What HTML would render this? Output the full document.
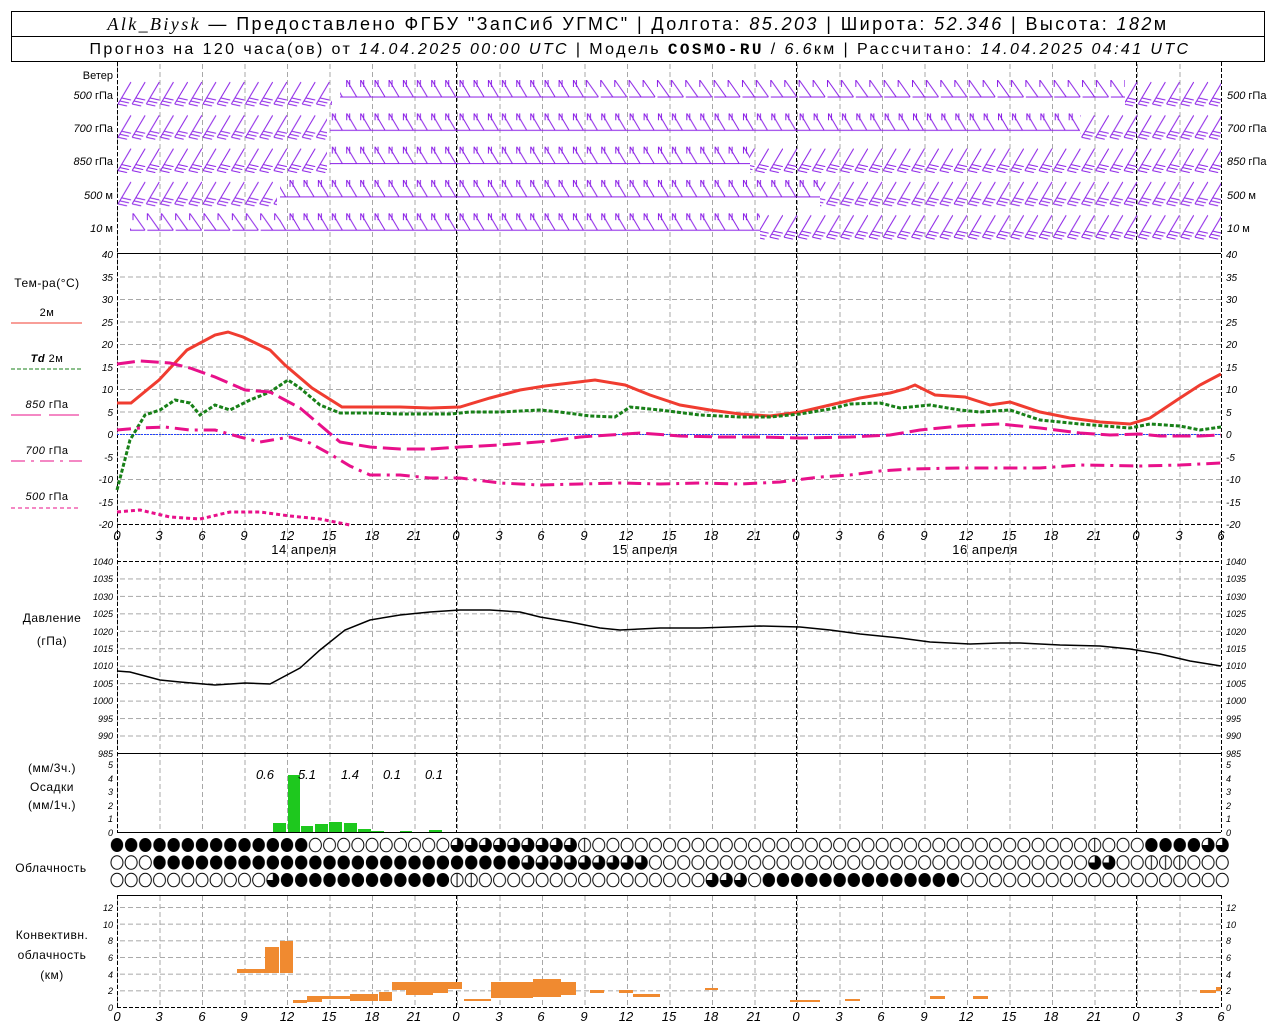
<!DOCTYPE html>
<html><head><meta charset="utf-8"><style>
html,body{margin:0;padding:0;background:#fff;}
svg{display:block;}
text{font-family:"Liberation Sans",sans-serif;fill:#000;}
.t{font-size:10px;font-style:italic;}
.l{font-size:12px;letter-spacing:0.5px;}
</style></head><body>
<svg width="1280" height="1024" viewBox="0 0 1280 1024" xmlns="http://www.w3.org/2000/svg">
<defs>
<pattern id="vg" x="117" y="0" width="42.5" height="8" patternUnits="userSpaceOnUse"><line x1="0.5" y1="0" x2="0.5" y2="5" stroke="#a8a8a8"/></pattern>
<pattern id="hgT" x="0" y="254" width="8" height="22.5" patternUnits="userSpaceOnUse"><line x1="0" y1="0.5" x2="5" y2="0.5" stroke="#a8a8a8"/></pattern>
<pattern id="hgP" x="0" y="561" width="8" height="17.45" patternUnits="userSpaceOnUse"><line x1="0" y1="0.5" x2="5" y2="0.5" stroke="#a8a8a8"/></pattern>
<pattern id="hgC" x="0" y="1007" width="8" height="16.67" patternUnits="userSpaceOnUse"><line x1="0" y1="0.5" x2="5" y2="0.5" stroke="#a8a8a8"/></pattern>
<pattern id="cf" x="109.9" y="836.5" width="14.17" height="17.5" patternUnits="userSpaceOnUse"><ellipse cx="7.08" cy="8.5" rx="6.2" ry="7" fill="#000"/></pattern>
<pattern id="ce" x="109.9" y="836.5" width="14.17" height="17.5" patternUnits="userSpaceOnUse"><ellipse cx="7.08" cy="8.5" rx="6" ry="6.8" fill="#fff" stroke="#000"/></pattern>
<pattern id="cq" x="109.9" y="836.5" width="14.17" height="17.5" patternUnits="userSpaceOnUse"><ellipse cx="7.08" cy="8.5" rx="6" ry="6.8" fill="#fff" stroke="#000"/><path d="M7.08 8.5 V1.7 A6 6.8 0 1 1 1.08 8.5 Z" fill="#000"/></pattern>
<pattern id="ch" x="109.9" y="836.5" width="14.17" height="17.5" patternUnits="userSpaceOnUse"><ellipse cx="7.08" cy="8.5" rx="6" ry="6.8" fill="#fff" stroke="#000"/><line x1="7.08" y1="1.7" x2="7.08" y2="15.3" stroke="#000"/></pattern>
<pattern id="wA" x="117" y="80" width="14.17" height="33.3" patternUnits="userSpaceOnUse"><g stroke="#8a1ee6" fill="none"><path d="M1 24 L14 2 M1 24 L10 26 M3 21 L12 23 M5 18 L14 20"/></g></pattern>
<pattern id="wB" x="117" y="80" width="28.34" height="33.3" patternUnits="userSpaceOnUse"><g stroke="#8a1ee6" fill="none"><path d="M0 17 H28.4 M3 0 L13 17 M3 0 V7 M6 0 V7 M17 0 L27 17 M17 0 V7 M20 0 V7"/></g></pattern>
<pattern id="wC" x="117" y="80" width="28.34" height="33.3" patternUnits="userSpaceOnUse"><g stroke="#8a1ee6" fill="none"><path d="M2 0 L14 17 M2 0 V7 M16 0 L28 17 M16 0 V7 M2 17 H28"/></g></pattern>
</defs>
<rect width="1280" height="1024" fill="#fff"/>

<!-- header -->
<rect x="11.5" y="11.5" width="1253" height="50" fill="none" stroke="#000"/>
<line x1="11" y1="36.5" x2="1265" y2="36.5" stroke="#000"/>
<text x="638" y="30" text-anchor="middle" style="font-size:18px;letter-spacing:2.4px"><tspan font-family="Liberation Serif" font-style="italic">Alk_Biysk</tspan> — Предоставлено ФГБУ "ЗапСиб УГМС" | Долгота: <tspan font-style="italic">85.203</tspan> | Широта: <tspan font-style="italic">52.346</tspan> | Высота: <tspan font-style="italic">182</tspan>м</text>
<text x="640" y="54" text-anchor="middle" style="font-size:16px;letter-spacing:2.4px">Прогноз на 120 часа(ов) от <tspan font-style="italic">14.04.2025 00:00 UTC</tspan>  | Модель <tspan font-family="Liberation Mono" font-weight="bold">COSMO-RU</tspan> / <tspan font-style="italic">6.6</tspan>км | Рассчитано: <tspan font-style="italic">14.04.2025 04:41 UTC</tspan></text>

<!-- grids -->
<rect x="117" y="62" width="1104" height="770" fill="url(#vg)"/>
<rect x="117" y="895" width="1104" height="112" fill="url(#vg)"/>
<rect x="117" y="255" width="1104" height="268" fill="url(#hgT)"/>
<rect x="117" y="562" width="1104" height="190" fill="url(#hgP)"/>
<rect x="117" y="896" width="1104" height="110" fill="url(#hgC)"/>
<g stroke="#000" stroke-dasharray="4,2">
<line x1="117.5" y1="62" x2="117.5" y2="832"/><line x1="1221.5" y1="62" x2="1221.5" y2="832"/>
<line x1="456.5" y1="62" x2="456.5" y2="832"/><line x1="796.5" y1="62" x2="796.5" y2="832"/><line x1="1136.5" y1="62" x2="1136.5" y2="832"/>
<line x1="117.5" y1="895" x2="117.5" y2="1007"/><line x1="1221.5" y1="895" x2="1221.5" y2="1007"/>
<line x1="456.5" y1="895" x2="456.5" y2="1007"/><line x1="796.5" y1="895" x2="796.5" y2="1007"/><line x1="1136.5" y1="895" x2="1136.5" y2="1007"/>
<line x1="117" y1="561.5" x2="1221" y2="561.5"/><line x1="117" y1="524.5" x2="1221" y2="524.5"/>
<line x1="117" y1="1007.5" x2="1221" y2="1007.5"/>
</g>
<g stroke="#000">
<line x1="117" y1="253.5" x2="1221" y2="253.5"/>
<line x1="117" y1="753.5" x2="1221" y2="753.5"/>
<line x1="117" y1="832.5" x2="1221" y2="832.5"/>
<line x1="117" y1="895.5" x2="1221" y2="895.5"/>
</g>

<!-- wind -->
<g>
<rect x="117" y="80" width="215" height="33" fill="url(#wA)"/>
<rect x="340" y="80" width="245" height="33" fill="url(#wB)"/>
<rect x="585" y="80" width="540" height="33" fill="url(#wC)"/>
<rect x="1125" y="80" width="96" height="33" fill="url(#wA)"/>
<rect x="117" y="113.3" width="210" height="33" fill="url(#wA)"/>
<rect x="330" y="113.3" width="750" height="33" fill="url(#wB)"/>
<rect x="1080" y="113.3" width="141" height="33" fill="url(#wA)"/>
<rect x="117" y="146.6" width="210" height="33" fill="url(#wA)"/>
<rect x="330" y="146.6" width="420" height="33" fill="url(#wB)"/>
<rect x="750" y="146.6" width="471" height="33" fill="url(#wA)"/>
<rect x="117" y="179.9" width="160" height="33" fill="url(#wA)"/>
<rect x="280" y="179.9" width="540" height="33" fill="url(#wB)"/>
<rect x="820" y="179.9" width="401" height="33" fill="url(#wA)"/>
<rect x="130" y="213.2" width="150" height="33" fill="url(#wC)"/>
<rect x="280" y="213.2" width="480" height="33" fill="url(#wB)"/>
<rect x="760" y="213.2" width="461" height="33" fill="url(#wA)"/>
</g>

<!-- temperature -->
<line x1="117" y1="434.5" x2="1221" y2="434.5" stroke="#2040ff" stroke-dasharray="2,1"/>
<polyline fill="none" stroke="#f03c30" stroke-width="3" points="117,403 131,403 159,380 187,350 215,335 228,332 243,337 270,350 285,365 312,388 342,407 370,407 400,407 430,408 460,407 490,398 520,390 545,386 570,383 595,380 625,385 650,395 680,405 710,410 740,414 770,416 800,412 830,405 860,398 890,393 905,389 915,385 935,395 965,397 990,405 1010,402 1040,412 1070,418 1100,422 1130,424 1150,418 1180,398 1200,385 1221,374"/>
<polyline fill="none" stroke="#188018" stroke-width="3" stroke-dasharray="4,2" points="117,490 130,440 145,415 160,410 175,400 190,403 200,415 215,405 230,410 250,400 270,392 288,380 300,388 320,405 340,413 370,413 400,414 450,414 470,412 500,412 540,410 560,412 590,416 615,417 630,407 660,410 700,415 740,417 770,417 800,414 830,409 850,404 880,403 900,408 930,405 960,410 980,412 1010,410 1040,420 1080,424 1130,428 1150,424 1180,426 1200,430 1221,427"/>
<polyline fill="none" stroke="#e8108a" stroke-width="3" stroke-dasharray="18,6" points="117,364 140,361 170,363 190,368 215,377 245,390 270,392 285,400 300,408 320,425 340,442 370,447 400,449 430,449 460,447 500,445 550,441 580,437 610,435 640,433 680,436 720,437 760,437 800,438 850,437 890,435 920,430 960,426 1000,424 1040,428 1080,433 1110,435 1140,434 1160,436 1200,436 1221,435"/>
<polyline fill="none" stroke="#e8108a" stroke-width="3" stroke-dasharray="14,6,3,6" points="117,430 140,428 165,427 190,430 215,430 240,437 260,442 290,437 310,443 330,454 350,466 370,475 400,475 430,478 460,478 500,483 540,485 580,484 620,483 660,484 700,483 740,484 780,482 820,477 850,475 880,471 910,469 960,468 1000,468 1040,468 1080,465 1140,466 1180,465 1221,463"/>
<polyline fill="none" stroke="#e8108a" stroke-width="3" stroke-dasharray="4,3" points="117,512 140,510 170,517 200,519 230,512 260,512 290,516 320,519 350,525"/>

<!-- temp legend -->
<g class="l">
<text x="47" y="287" text-anchor="middle">Тем-ра(°С)</text>
<text x="47" y="316" text-anchor="middle" style="font-size:11px">2м</text>
<line x1="11" y1="323" x2="82" y2="323" stroke="#f03c30"/>
<text x="47" y="362" text-anchor="middle" style="font-size:11px"><tspan font-style="italic" font-weight="bold">Td</tspan>  2м</text>
<line x1="11" y1="369" x2="82" y2="369" stroke="#188018" stroke-dasharray="4,2"/>
<text x="47" y="408" text-anchor="middle" style="font-size:11px"><tspan font-style="italic">850</tspan> гПа</text>
<line x1="11" y1="415" x2="82" y2="415" stroke="#e8108a" stroke-dasharray="30,8"/>
<text x="47" y="454" text-anchor="middle" style="font-size:11px"><tspan font-style="italic">700</tspan> гПа</text>
<line x1="11" y1="461" x2="82" y2="461" stroke="#e8108a" stroke-dasharray="14,6,3,6"/>
<text x="47" y="500" text-anchor="middle" style="font-size:11px"><tspan font-style="italic">500</tspan> гПа</text>
<line x1="11" y1="508" x2="78" y2="508" stroke="#e8108a" stroke-dasharray="4,3"/>
</g>

<!-- wind labels -->
<g style="font-size:11px">
<text x="113" y="79" text-anchor="end">Ветер</text>
<text x="113" y="99" text-anchor="end"><tspan font-style="italic">500</tspan> гПа</text>
<text x="113" y="132" text-anchor="end"><tspan font-style="italic">700</tspan> гПа</text>
<text x="113" y="165" text-anchor="end"><tspan font-style="italic">850</tspan> гПа</text>
<text x="113" y="199" text-anchor="end"><tspan font-style="italic">500</tspan>  м</text>
<text x="113" y="232" text-anchor="end"><tspan font-style="italic">10</tspan>   м</text>
<text x="1227" y="99"><tspan font-style="italic">500</tspan> гПа</text>
<text x="1227" y="132"><tspan font-style="italic">700</tspan> гПа</text>
<text x="1227" y="165"><tspan font-style="italic">850</tspan> гПа</text>
<text x="1227" y="199"><tspan font-style="italic">500</tspan>  м</text>
<text x="1227" y="232"><tspan font-style="italic">10</tspan>   м</text>
</g>

<!-- temp ticks -->
<g class="t">
<text x="113" y="258" text-anchor="end">40</text><text x="113" y="281" text-anchor="end">35</text><text x="113" y="303" text-anchor="end">30</text><text x="113" y="326" text-anchor="end">25</text><text x="113" y="348" text-anchor="end">20</text><text x="113" y="371" text-anchor="end">15</text><text x="113" y="393" text-anchor="end">10</text><text x="113" y="416" text-anchor="end">5</text><text x="113" y="438" text-anchor="end">0</text><text x="113" y="461" text-anchor="end">-5</text><text x="113" y="483" text-anchor="end">-10</text><text x="113" y="506" text-anchor="end">-15</text><text x="113" y="528" text-anchor="end">-20</text>
<text x="1226" y="258">40</text><text x="1226" y="281">35</text><text x="1226" y="303">30</text><text x="1226" y="326">25</text><text x="1226" y="348">20</text><text x="1226" y="371">15</text><text x="1226" y="393">10</text><text x="1226" y="416">5</text><text x="1226" y="438">0</text><text x="1226" y="461">-5</text><text x="1226" y="483">-10</text><text x="1226" y="506">-15</text><text x="1226" y="528">-20</text>
</g>
<g class="t" style="font-size:13px" text-anchor="middle">
<text x="117" y="540">0</text><text x="159" y="540">3</text><text x="202" y="540">6</text><text x="244" y="540">9</text><text x="287" y="540">12</text><text x="329" y="540">15</text><text x="372" y="540">18</text><text x="414" y="540">21</text><text x="456" y="540">0</text><text x="499" y="540">3</text><text x="541" y="540">6</text><text x="584" y="540">9</text><text x="626" y="540">12</text><text x="669" y="540">15</text><text x="711" y="540">18</text><text x="754" y="540">21</text><text x="796" y="540">0</text><text x="839" y="540">3</text><text x="881" y="540">6</text><text x="924" y="540">9</text><text x="966" y="540">12</text><text x="1009" y="540">15</text><text x="1051" y="540">18</text><text x="1094" y="540">21</text><text x="1136" y="540">0</text><text x="1179" y="540">3</text><text x="1221" y="540">6</text>
</g>
<g class="l" text-anchor="middle" style="font-size:13px">
<text x="304" y="554">14 апреля</text><text x="645" y="554">15 апреля</text><text x="985" y="554">16 апреля</text>
</g>

<!-- pressure -->
<polyline fill="none" stroke="#000" stroke-width="1.5" points="117,671 130,672 160,680 180,682 215,685 245,683 270,684 300,668 320,650 345,630 370,620 400,615 430,612 460,610 490,610 520,612 540,617 570,622 600,628 620,630 660,628 700,628 760,626 800,627 830,630 860,634 900,638 930,642 970,644 1000,643 1020,643 1060,645 1100,646 1130,649 1160,654 1190,661 1221,666"/>
<g class="l" text-anchor="middle"><text x="52" y="622">Давление</text><text x="52" y="645">(гПа)</text></g>
<g class="t" style="font-size:9px">
<text x="113" y="565" text-anchor="end">1040</text><text x="113" y="582" text-anchor="end">1035</text><text x="113" y="600" text-anchor="end">1030</text><text x="113" y="617" text-anchor="end">1025</text><text x="113" y="635" text-anchor="end">1020</text><text x="113" y="652" text-anchor="end">1015</text><text x="113" y="669" text-anchor="end">1010</text><text x="113" y="687" text-anchor="end">1005</text><text x="113" y="704" text-anchor="end">1000</text><text x="113" y="722" text-anchor="end">995</text><text x="113" y="739" text-anchor="end">990</text><text x="113" y="757" text-anchor="end">985</text>
<text x="1226" y="565">1040</text><text x="1226" y="582">1035</text><text x="1226" y="600">1030</text><text x="1226" y="617">1025</text><text x="1226" y="635">1020</text><text x="1226" y="652">1015</text><text x="1226" y="669">1010</text><text x="1226" y="687">1005</text><text x="1226" y="704">1000</text><text x="1226" y="722">995</text><text x="1226" y="739">990</text><text x="1226" y="757">985</text>
</g>

<!-- precip -->
<g fill="#1ec81e">
<rect x="273" y="823" width="13" height="9"/><rect x="288" y="775" width="12" height="57"/><rect x="301" y="826" width="12" height="6"/><rect x="315" y="824" width="13" height="8"/><rect x="329" y="822" width="13" height="10"/><rect x="344" y="823" width="13" height="9"/><rect x="358" y="829" width="13" height="3"/><rect x="371" y="831" width="13" height="1"/><rect x="400" y="831" width="12" height="1"/><rect x="429" y="830" width="13" height="2"/>
</g>
<g class="t" style="font-size:13px" text-anchor="middle"><text x="265" y="779">0.6</text><text x="307" y="779">5.1</text><text x="350" y="779">1.4</text><text x="392" y="779">0.1</text><text x="434" y="779">0.1</text></g>
<g class="l" text-anchor="middle"><text x="52" y="772">(мм/3ч.)</text><text x="52" y="791">Осадки</text><text x="52" y="809">(мм/1ч.)</text></g>
<g class="t" style="font-size:9px">
<text x="113" y="768" text-anchor="end">5</text><text x="113" y="782" text-anchor="end">4</text><text x="113" y="795" text-anchor="end">3</text><text x="113" y="809" text-anchor="end">2</text><text x="113" y="822" text-anchor="end">1</text><text x="113" y="836" text-anchor="end">0</text>
<text x="1226" y="768">5</text><text x="1226" y="782">4</text><text x="1226" y="795">3</text><text x="1226" y="809">2</text><text x="1226" y="822">1</text><text x="1226" y="836">0</text>
</g>

<!-- clouds -->
<g>
<rect x="109.9" y="836.5" width="198.4" height="17.5" fill="url(#cf)"/>
<rect x="308.3" y="836.5" width="141.7" height="17.5" fill="url(#ce)"/>
<rect x="450" y="836.5" width="127.5" height="17.5" fill="url(#cq)"/>
<rect x="577.5" y="836.5" width="14.2" height="17.5" fill="url(#ch)"/>
<rect x="591.7" y="836.5" width="496" height="17.5" fill="url(#ce)"/>
<rect x="1087.7" y="836.5" width="14.2" height="17.5" fill="url(#ch)"/>
<rect x="1101.9" y="836.5" width="42.5" height="17.5" fill="url(#ce)"/>
<rect x="1144.4" y="836.5" width="56.7" height="17.5" fill="url(#cf)"/>
<rect x="1201.1" y="836.5" width="28.4" height="17.5" fill="url(#cq)"/>

<rect x="109.9" y="854" width="42.5" height="17.5" fill="url(#ce)"/>
<rect x="152.4" y="854" width="368.4" height="17.5" fill="url(#cf)"/>
<rect x="520.8" y="854" width="127.5" height="17.5" fill="url(#cq)"/>
<rect x="648.3" y="854" width="439.4" height="17.5" fill="url(#ce)"/>
<rect x="1087.7" y="854" width="28.4" height="17.5" fill="url(#cq)"/>
<rect x="1116.1" y="854" width="28.4" height="17.5" fill="url(#ce)"/>
<rect x="1144.4" y="854" width="42.5" height="17.5" fill="url(#ch)"/>
<rect x="1186.9" y="854" width="42.5" height="17.5" fill="url(#ce)"/>

<rect x="109.9" y="871.5" width="155.9" height="17.5" fill="url(#ce)"/>
<rect x="265.8" y="871.5" width="14.2" height="17.5" fill="url(#cq)"/>
<rect x="280" y="871.5" width="170" height="17.5" fill="url(#cf)"/>
<rect x="450" y="871.5" width="28.4" height="17.5" fill="url(#ch)"/>
<rect x="478.4" y="871.5" width="226.7" height="17.5" fill="url(#ce)"/>
<rect x="705.1" y="871.5" width="42.5" height="17.5" fill="url(#cq)"/>
<rect x="747.6" y="871.5" width="14.2" height="17.5" fill="url(#ce)"/>
<rect x="761.8" y="871.5" width="198.4" height="17.5" fill="url(#cf)"/>
<rect x="960.2" y="871.5" width="269.3" height="17.5" fill="url(#ce)"/>
</g>
<text x="51" y="872" class="l" text-anchor="middle">Облачность</text>

<!-- convective -->
<g fill="#f08a30">
<rect x="237" y="969" width="28" height="4"/><rect x="265" y="947" width="14" height="26"/><rect x="280" y="941" width="13" height="32"/>
<rect x="293" y="1000" width="14" height="3"/><rect x="307" y="996" width="15" height="6"/><rect x="322" y="996" width="28" height="3"/><rect x="350" y="994" width="28" height="7"/><rect x="379" y="992" width="13" height="9"/>
<rect x="392" y="982" width="14" height="8"/><rect x="406" y="982" width="27" height="13"/><rect x="433" y="982" width="15" height="11"/><rect x="448" y="982" width="14" height="7"/>
<rect x="464" y="999" width="27" height="2"/><rect x="491" y="982" width="42" height="16"/><rect x="533" y="979" width="14" height="18"/><rect x="547" y="979" width="14" height="18"/><rect x="561" y="982" width="15" height="13"/>
<rect x="590" y="990" width="14" height="3"/><rect x="619" y="990" width="14" height="3"/><rect x="633" y="994" width="27" height="3"/>
<rect x="705" y="988" width="13" height="2"/><rect x="790" y="1000" width="30" height="2"/><rect x="845" y="999" width="15" height="2"/><rect x="930" y="996" width="15" height="3"/><rect x="973" y="996" width="15" height="3"/><rect x="1200" y="990" width="16" height="3"/><rect x="1216" y="987" width="5" height="4"/>
</g>
<g class="l" text-anchor="middle"><text x="52" y="939">Конвективн.</text><text x="52" y="959">облачность</text><text x="52" y="979">(км)</text></g>
<g class="t" style="font-size:9px">
<text x="113" y="911" text-anchor="end">12</text><text x="113" y="928" text-anchor="end">10</text><text x="113" y="944" text-anchor="end">8</text><text x="113" y="961" text-anchor="end">6</text><text x="113" y="978" text-anchor="end">4</text><text x="113" y="994" text-anchor="end">2</text><text x="113" y="1011" text-anchor="end">0</text>
<text x="1226" y="911">12</text><text x="1226" y="928">10</text><text x="1226" y="944">8</text><text x="1226" y="961">6</text><text x="1226" y="978">4</text><text x="1226" y="994">2</text><text x="1226" y="1011">0</text>
</g>
<g class="t" style="font-size:13px" text-anchor="middle">
<text x="117" y="1021">0</text><text x="159" y="1021">3</text><text x="202" y="1021">6</text><text x="244" y="1021">9</text><text x="287" y="1021">12</text><text x="329" y="1021">15</text><text x="372" y="1021">18</text><text x="414" y="1021">21</text><text x="456" y="1021">0</text><text x="499" y="1021">3</text><text x="541" y="1021">6</text><text x="584" y="1021">9</text><text x="626" y="1021">12</text><text x="669" y="1021">15</text><text x="711" y="1021">18</text><text x="754" y="1021">21</text><text x="796" y="1021">0</text><text x="839" y="1021">3</text><text x="881" y="1021">6</text><text x="924" y="1021">9</text><text x="966" y="1021">12</text><text x="1009" y="1021">15</text><text x="1051" y="1021">18</text><text x="1094" y="1021">21</text><text x="1136" y="1021">0</text><text x="1179" y="1021">3</text><text x="1221" y="1021">6</text>
</g>
</svg>
</body></html>
